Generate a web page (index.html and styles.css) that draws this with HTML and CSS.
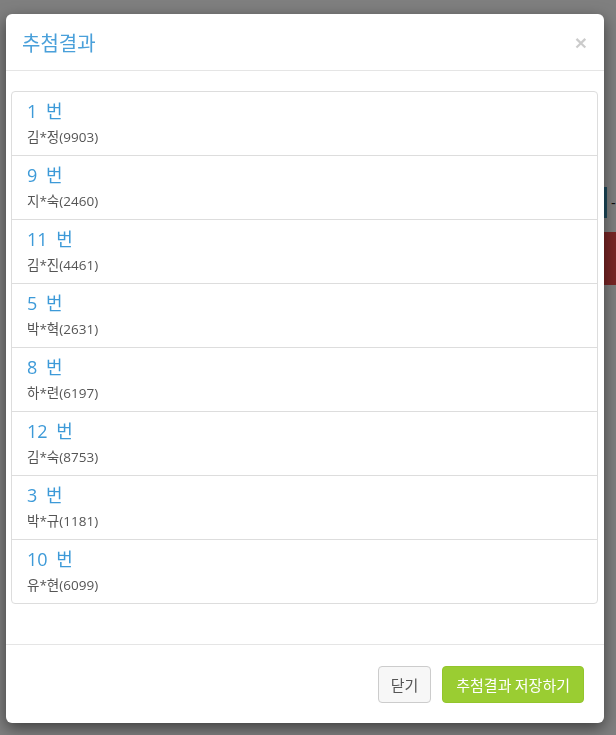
FILE: index.html
```html
<!DOCTYPE html>
<html>
<head>
  <title>추첨결과</title>
  <link rel="stylesheet" href="styles.css">
</head>
<body>

  <div class="page">
    <div class="toolbar">
      <button class="page-btn">-</button>
    </div>
    <div class="alert-bar"></div>
  </div>

  <div class="backdrop"></div>

  <div class="modal">
    <div class="modal-header">
      <h4 class="modal-title">추첨결과</h4>
      <button class="close">&times;</button>
    </div>

    <div class="modal-body">
      <ul class="list-group" id="results"></ul>
    </div>

    <div class="modal-footer">
      <button class="btn btn-default">닫기</button>
      <button class="btn btn-save">추첨결과 저장하기</button>
    </div>
  </div>

  <script>
    const results = [
      { no: 1, name: '김*정(9903)' },
      { no: 9, name: '지*숙(2460)' },
      { no: 11, name: '김*진(4461)' },
      { no: 5, name: '박*혁(2631)' },
      { no: 8, name: '하*련(6197)' },
      { no: 12, name: '김*숙(8753)' },
      { no: 3, name: '박*규(1181)' },
      { no: 10, name: '유*현(6099)' }
    ];

    const list = document.getElementById('results');
    results.forEach(item => {
      const li = document.createElement('li');
      li.className = 'list-group-item';
      li.innerHTML = '<div class="item-no">' + item.no + ' 번</div>' +
                     '<div class="item-name">' + item.name + '</div>';
      list.appendChild(li);
    });
  </script>

</body>
</html>
```

FILE: styles.css
```css
body {
  margin: 0;
  font-family: "Open Sans", "Noto Sans CJK KR", sans-serif;
  background-color: #fff;
}

/* page behind the dialog */
.page {
  padding-top: 187px;
}

.toolbar {
  display: flex;
  justify-content: flex-end;
}

.page-btn {
  width: 12px;
  height: 31px;
  padding: 0 0 0 4px;
  border: none;
  border-left: 3px solid #3a94b8;
  background-color: #fff;
  color: #222;
  font-size: 14px;
  text-align: left;
}

.alert-bar {
  margin: 14px 0 0 30px;
  height: 53px;
  background-color: #f24c4c;
}

.backdrop {
  position: fixed;
  top: 0;
  left: 0;
  right: 0;
  bottom: 0;
  background-color: rgba(0, 0, 0, 0.5);
}

/* dialog */
.modal {
  position: absolute;
  top: 14px;
  left: 6px;
  width: 598px;
  background-color: #fff;
  border-radius: 6px;
  box-shadow: 0 5px 15px rgba(0, 0, 0, 0.5);
}

.modal-header {
  display: flex;
  justify-content: space-between;
  align-items: center;
  height: 56px;
  padding: 0 17px 0 16px;
  border-bottom: 1px solid #e5e5e5;
}

.modal-title {
  margin: 0;
  font-size: 20px;
  font-weight: normal;
  color: #4aa0da;
}

.close {
  padding: 0;
  border: none;
  background: none;
  font-family: "Liberation Sans", sans-serif;
  font-size: 21px;
  font-weight: bold;
  line-height: 1;
  color: #000;
  opacity: 0.2;
  cursor: pointer;
}

.modal-body {
  padding: 20px 6px 20px 5px;
}

.list-group {
  margin: 0 0 20px;
  padding: 0;
  list-style: none;
  border: 1px solid #ddd;
  border-radius: 4px;
}

.list-group-item {
  height: 63px;
  padding: 7px 16px 0 15px;
  box-sizing: border-box;
}

.list-group-item + .list-group-item {
  height: 64px;
  border-top: 1px solid #ddd;
}

.item-no {
  font-size: 18px;
  line-height: 24px;
  word-spacing: 4px;
  color: #3d9ad8;
}

.item-name {
  font-size: 13.5px;
  line-height: 28px;
  color: #555;
}

.modal-footer {
  display: flex;
  justify-content: flex-end;
  gap: 11px;
  padding: 21px 20px 20px;
  border-top: 1px solid #e5e5e5;
}

.btn {
  height: 37px;
  padding: 0 12px;
  font-family: "Noto Sans CJK KR", sans-serif;
  font-size: 15px;
  border-radius: 4px;
  cursor: pointer;
}

.btn-default {
  background-color: #f7f7f7;
  border: 1px solid #ccc;
  color: #555;
}

.btn-save {
  padding: 0 13px;
  background-color: #9acd32;
  border: 1px solid #93c52c;
  color: #fff;
}
```
